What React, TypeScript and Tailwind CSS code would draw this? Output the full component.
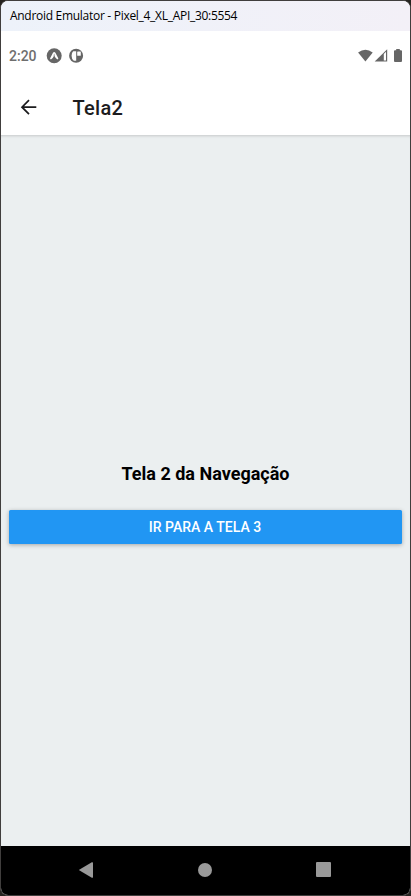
function TitleBar() {
  return (
    <div className="flex h-[30px] shrink-0 items-center bg-gradient-to-r from-[#edf2fa] to-[#f3f0f7] pl-[9px]">
      <span className="whitespace-nowrap font-['Open_Sans',sans-serif] text-[12px] leading-[16px] tracking-[-0.29px] text-black">
        Android Emulator - Pixel_4_XL_API_30:5554
      </span>
    </div>
  );
}

function StatusBar() {
  return (
    <div className="flex h-[49px] shrink-0 items-center pl-[8px] pr-[7px] text-[#6e6e6e]">
      <span className="w-[37px] text-[14px] font-medium leading-[16px]">2:20</span>
      <svg className="h-[16px] w-[16px]" viewBox="0 0 16 16">
        <circle cx="8.2" cy="7.7" r="7.5" fill="#666" />
        <path d="M4.9 11.4 L4 10.6 L7 4.7 Q8.2 3.4 9.4 4.7 L12.4 10.6 L11.5 11.4 Q9.9 11 8.2 7.4 Q6.5 11 4.9 11.4Z" fill="#fff" />
        <path d="M8.2 5.6 L9 7.8 H7.4Z" fill="#999" />
      </svg>
      <svg className="ml-[7px] h-[16px] w-[16px]" viewBox="0 0 16 16">
        <circle cx="7.1" cy="7.7" r="7" fill="#666" />
        <path d="M4.2 3.3 H7.2 V12.8 H4.8 Q2.6 11.4 2.6 7.7 Q2.6 4.8 4.2 3.3Z" fill="#fff" />
        <rect x="8.2" y="3.5" width="3.6" height="4.3" rx="0.6" fill="#fff" />
      </svg>
      <svg className="ml-auto h-[14px] w-[45px]" viewBox="0 0 45 14" fill="#666">
        <path d="M0.1 3.6 Q7.4 -2.2 14.7 3.6 L7.4 12.6Z" />
        <path d="M16.7 12.6 L29.2 0.2 V12.6Z" />
        <path d="M25.8 5 L28 2.8 V11.6 H25.8Z" fill="#fff" />
        <path d="M38.2 0 H41.8 V1.2 H43 Q44 1.2 44 2.2 V12 Q44 13 43 13 H37 Q36 13 36 12 V2.2 Q36 1.2 37 1.2 H38.2Z" />
      </svg>
    </div>
  );
}

function Header() {
  return (
    <div className="flex h-[55px] shrink-0 items-center pl-[19px]">
      <svg className="mb-px h-[16px] w-[17px]" viewBox="0 0 17 16" fill="none" stroke="#1c1c1e" strokeWidth="1.7">
        <path d="M16.3 8.2 H2.2 M9 1.2 L2 8.2 L9 15.2" />
      </svg>
      <h1 className="ml-[35.5px] text-[20px] font-medium leading-[24px] tracking-[0.3px] text-[#1c1c1e]">Tela2</h1>
    </div>
  );
}

function NavigationBar() {
  return (
    <div className="flex h-[49px] shrink-0 items-center bg-black pb-[2px] pl-[77px]">
      <svg className="h-[18px] w-[16px]" viewBox="0 0 16 18" fill="#999">
        <path d="M0.8 9 L13.8 1.3 Q15 0.8 15 2 V16 Q15 17.2 13.8 16.7Z" />
      </svg>
      <div className="ml-[104px] h-[14px] w-[14px] rounded-full bg-[#999999]" />
      <div className="ml-[103.5px] h-[15px] w-[15px] rounded-[1px] bg-[#999999]" />
    </div>
  );
}

export default function App() {
  return (
    <div className="h-[896px] w-[411px] overflow-hidden bg-[#25231f]">
      <div className="flex h-full w-full flex-col overflow-hidden rounded-[8px] border border-[#403e3d] bg-white font-['Roboto',sans-serif]">
        <TitleBar />
        <StatusBar />
        <Header />
        <main className="flex grow flex-col items-center bg-[#ebeff0] px-2 shadow-[inset_0_3px_3px_-2px_rgba(0,0,0,0.16)]">
          <h2 className="mt-[327px] text-[18px] font-bold leading-[24px] text-black">Tela 2 da Navegação</h2>
          <button className="mt-[23.5px] h-[34.5px] w-[393px] rounded-[1.5px] bg-[#2196f3] pr-px text-[14px] font-medium leading-[20px] text-white shadow-[0_1px_4px_rgba(0,0,0,0.3)]">
            IR PARA A TELA 3
          </button>
        </main>
        <NavigationBar />
      </div>
    </div>
  );
}
